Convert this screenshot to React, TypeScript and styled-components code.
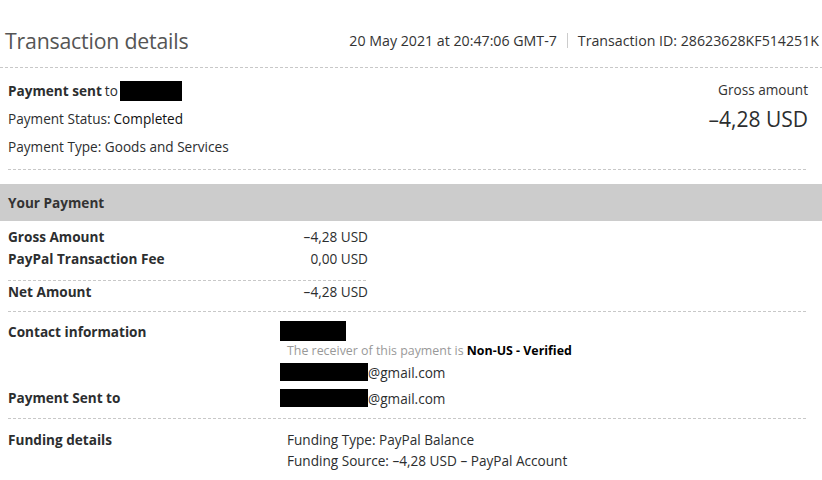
import React from 'react';
import styled, { createGlobalStyle, css } from 'styled-components';

const GlobalStyle = createGlobalStyle`
  body {
    margin: 0;
    background: #fff;
    font-family: 'Open Sans', 'Noto Sans', sans-serif;
    color: #2c2e2f;
  }
`;

const dashed = css`
  background-image: repeating-linear-gradient(to right, #c8c8c8 0 3px, transparent 3px 5px);
  background-size: 100% 1px;
  background-repeat: no-repeat;
  background-position: left bottom;
`;

const Page = styled.div`
  width: 822px;
  font-size: 13.6px;
`;

const Header = styled.header`
  ${dashed};
  display: flex;
  align-items: center;
  justify-content: space-between;
  height: 68px;
  padding: 13px 3px 0 5px;
  box-sizing: border-box;
`;

const Title = styled.h1`
  margin: 0;
  font-size: 21.3px;
  font-weight: 400;
  color: #555;
  letter-spacing: -0.2px;
`;

const Meta = styled.div`
  display: flex;
  align-items: center;
  gap: 10px;
  font-size: 14.2px;
  color: #333;
`;

const Pipe = styled.span`
  width: 1px;
  height: 15px;
  background: #ccc;
`;

const Summary = styled.section`
  ${dashed};
  display: flex;
  justify-content: space-between;
  margin: 0 14px 0 8px;
  padding: 13px 0 13px;
`;

const SummaryLines = styled.div`
  display: flex;
  flex-direction: column;
  gap: 8px;
`;

const Line = styled.div`
  display: flex;
  align-items: center;
  line-height: 20px;
`;

const Strong = styled.b`
  font-weight: 700;
  margin-right: 3px;
`;

const Medium = styled.span`
  font-weight: 500;
  color: #111;
  margin-left: 3px;
`;

const Redact = styled.span<{ w: number; h?: number }>`
  display: inline-block;
  width: ${(p) => p.w}px;
  height: ${(p) => p.h ?? 20}px;
  background: #000;
`;

const Gross = styled.div`
  display: flex;
  flex-direction: column;
  align-items: flex-end;
  gap: 7px;
`;

const GrossLabel = styled.div`
  line-height: 18px;
  color: #333;
`;

const GrossValue = styled.div`
  font-size: 21px;
  line-height: 26px;
  color: #2c2e2f;
`;

const Band = styled.div`
  margin-top: 14px;
  height: 37px;
  background: #cccccc;
  display: flex;
  align-items: center;
  padding-left: 8px;
  font-weight: 700;
  color: #333;
`;

const Amounts = styled.div`
  ${dashed};
  margin: 0 14px 0 8px;
  padding: 5px 0 9px;
`;

const AmountTable = styled.div`
  width: 360px;
`;

const AmountRow = styled.div<{ rule?: boolean }>`
  display: flex;
  justify-content: space-between;
  line-height: 22px;
  font-weight: 700;
  ${(p) => p.rule && dashed};
  ${(p) => p.rule && 'padding-bottom: 11px;'}

  span {
    font-weight: 400;
  }
`;

const Detail = styled.div<{ rule?: boolean; top: number; bottom: number }>`
  ${(p) => p.rule && dashed};
  display: grid;
  grid-template-columns: 272px 1fr;
  margin: 0 14px 0 8px;
  padding: ${(p) => `${p.top}px 0 ${p.bottom}px`};
`;

const Label = styled.div`
  font-weight: 700;
  line-height: 22px;
`;

const Values = styled.div`
  display: flex;
  flex-direction: column;
`;

const Value = styled.div<{ indent?: boolean; h?: number }>`
  display: flex;
  align-items: center;
  height: ${(p) => p.h ?? 21}px;
  padding-left: ${(p) => (p.indent ? '7px' : '0')};
`;

const Note = styled.div`
  font-size: 12.4px;
  color: #999;
  padding-left: 7px;
  line-height: 20px;

  b {
    color: #000;
    font-weight: 700;
  }
`;

export default function App() {
  return (
    <Page>
      <GlobalStyle />
      <Header>
        <Title>Transaction details</Title>
        <Meta>
          <span>20 May 2021 at 20:47:06 GMT-7</span>
          <Pipe />
          <span>Transaction ID: 28623628KF514251K</span>
        </Meta>
      </Header>

      <Summary>
        <SummaryLines>
          <Line>
            <Strong>Payment sent</Strong> to <Redact w={62} style={{ marginLeft: 2 }} />
          </Line>
          <Line>
            Payment Status:<Medium>Completed</Medium>
          </Line>
          <Line>Payment Type: Goods and Services</Line>
        </SummaryLines>
        <Gross>
          <GrossLabel>Gross amount</GrossLabel>
          <GrossValue>–4,28 USD</GrossValue>
        </Gross>
      </Summary>

      <Band>Your Payment</Band>

      <Amounts>
        <AmountTable>
          <AmountRow>
            Gross Amount<span>–4,28 USD</span>
          </AmountRow>
          <AmountRow rule>
            PayPal Transaction Fee<span>0,00 USD</span>
          </AmountRow>
          <AmountRow>
            Net Amount<span>–4,28 USD</span>
          </AmountRow>
        </AmountTable>
      </Amounts>

      <Detail top={9} bottom={0}>
        <Label>Contact information</Label>
        <Values>
          <Value h={20}>
            <Redact w={66} />
          </Value>
          <Note>
            The receiver of this payment is <b>Non-US - Verified</b>
          </Note>
          <Value h={22}>
            <Redact w={88} h={18} />
            @gmail.com
          </Value>
        </Values>
      </Detail>

      <Detail rule top={4} bottom={10}>
        <Label>Payment Sent to</Label>
        <Values>
          <Value h={22}>
            <Redact w={88} h={18} />
            @gmail.com
          </Value>
        </Values>
      </Detail>

      <Detail top={10} bottom={0}>
        <Label>Funding details</Label>
        <Values>
          <Value indent>Funding Type: PayPal Balance</Value>
          <Value indent>Funding Source: –4,28 USD – PayPal Account</Value>
        </Values>
      </Detail>
    </Page>
  );
}
